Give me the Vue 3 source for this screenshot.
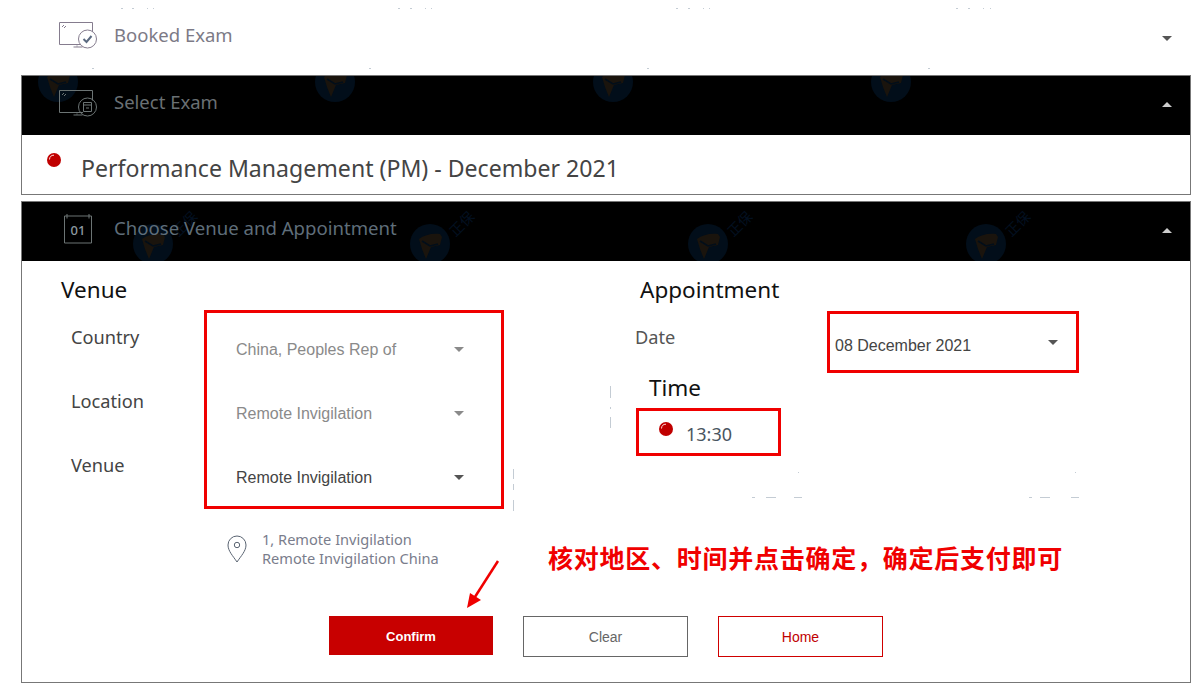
<script setup>
const selectMarks = [58, 335, 613, 891]
const venueMarks = [153, 430, 708, 986]
const venueRows = [
  { text: 'China, Peoples Rep of', off: true },
  { text: 'Remote Invigilation', off: true },
  { text: 'Remote Invigilation', off: false }
]
// leftovers of the watermark on the white areas
const specks = [
  [121, 8, 2, 1], [132, 8, 2, 1], [147, 8, 1, 1], [153, 8, 1, 1],
  [398, 8, 2, 1], [410, 8, 2, 1], [425, 8, 1, 1], [431, 8, 1, 1],
  [676, 8, 2, 1], [688, 8, 2, 1], [703, 8, 1, 1], [709, 8, 1, 1],
  [956, 8, 2, 1], [968, 8, 2, 1], [983, 8, 1, 1], [990, 8, 1, 1],
  [92, 68, 2, 1], [369, 68, 2, 1], [647, 68, 2, 1], [928, 68, 2, 1],
  [610, 386, 1, 12], [610, 407, 1, 2], [610, 417, 1, 11],
  [513, 469, 1, 10], [513, 484, 1, 6], [513, 500, 1, 11],
  [798, 472, 1, 1], [1075, 472, 1, 1],
  [752, 497, 3, 1], [766, 497, 10, 1], [794, 497, 8, 1],
  [1029, 497, 3, 1], [1040, 497, 10, 1], [1071, 497, 8, 1]
]
</script>

<template>
  <div class="page">
    <div class="booked">
      <svg class="exam-icon" width="40" height="30" viewBox="0 0 40 30" fill="none" stroke="#857c8e">
        <path d="M24 22.500H.5V.5h33v10" />
        <path d="M3 5l2-2M5 6l2-2" />
        <path d="M14.500 25h9M18 23.500v1" />
        <circle cx="28.500" cy="17" r="9" fill="#fff" />
        <path d="M24.500 17l3 3 5-6" stroke="#5b6a80" stroke-width="2" />
      </svg>
      <span class="title">Booked Exam</span>
      <span class="caret down"></span>
    </div>

    <section class="panel">
      <header class="head">
        <svg v-for="x in selectMarks" :key="x" class="mark mark-top" :style="{ left: x - 42 + 'px' }" width="40" height="40" viewBox="0 0 40 40">
          <circle cx="20" cy="20" r="20" fill="#020e1a" />
          <path d="M9 15c5-4 13-6 21-5l2 3-2 8-9 2-5 12-4-10z" fill="#1a140d" />
          <path d="M12 17l8 5 8-2" fill="none" stroke="#020e1a" stroke-width="1.500" />
        </svg>
        <svg class="exam-icon" width="40" height="30" viewBox="0 0 40 30" fill="none" stroke="#6c7474">
          <path d="M24 22.500H.5V.5h33v10" />
          <path d="M3 5l2-2M5 6l2-2" />
          <path d="M14.500 25h9M18 23.500v1" />
          <circle cx="28.500" cy="17" r="9" />
          <path d="M24.500 12.500h8v9h-8zM24.500 15h8M27 18h3" />
        </svg>
        <span class="title dim">Select Exam</span>
        <span class="caret up"></span>
      </header>
      <div class="exam-body">
        <svg class="radio" width="14" height="14" viewBox="0 0 14 14">
          <circle cx="7" cy="7" r="7" fill="#c00000" />
          <path d="M2.500 6.500A4.500 4.500 0 0 1 7 2.200" fill="none" stroke="#ffd9d9" />
        </svg>
        <span class="exam-name">Performance Management (PM) - December 2021</span>
      </div>
    </section>

    <section class="panel second">
      <header class="head">
        <svg v-for="x in venueMarks" :key="x" class="mark mark-low" :style="{ left: x - 42 + 'px' }" width="40" height="40" viewBox="0 0 40 40">
          <circle cx="20" cy="20" r="20" fill="#020e1a" />
          <path d="M9 15c5-4 13-6 21-5l2 3-2 8-9 2-5 12-4-10z" fill="#1a140d" />
          <path d="M12 17l8 5 8-2" fill="none" stroke="#020e1a" stroke-width="1.500" />
        </svg>
        <span v-for="x in venueMarks" :key="'t' + x" class="mark-text" :style="{ left: x - 5 + 'px' }">正保</span>
        <span class="cal">
          <svg class="cal-frame" width="30" height="32" viewBox="0 0 30 32" fill="none" stroke="#6c7474">
            <path d="M1.500 2h27v27h-27zM4 0v4.500M26 0v4.500" />
          </svg>
          <span class="cal-num">01</span>
        </span>
        <span class="title dim blue">Choose Venue and Appointment</span>
        <span class="caret up"></span>
      </header>

      <div class="venue-body">
        <div class="cols">
          <div class="col-left">
            <h3 class="sub">Venue</h3>
            <div class="form">
              <div class="labels">
                <div class="label">Country</div>
                <div class="label">Location</div>
                <div class="label">Venue</div>
              </div>
              <div class="red selects">
                <div v-for="(row, i) in venueRows" :key="i" class="select" :class="{ off: row.off }">
                  <span>{{ row.text }}</span>
                  <span class="caret down"></span>
                </div>
              </div>
            </div>
            <div class="address">
              <svg width="20" height="28" viewBox="0 0 20 28" fill="none" stroke="#5a6472">
                <path d="M10 27C6 21 1 16 1 10a9 9 0 0 1 18 0c0 6-5 11-9 17z" />
                <circle cx="10" cy="10" r="2.700" />
              </svg>
              <div class="address-text">
                <div>1, Remote Invigilation</div>
                <div>Remote Invigilation China</div>
              </div>
            </div>
          </div>

          <div class="col-right">
            <h3 class="sub sub-appt">Appointment</h3>
            <div class="date-row">
              <div class="label date-label">Date</div>
              <div class="red date-box">
                <span>08 December 2021</span>
                <span class="caret down"></span>
              </div>
            </div>
            <h3 class="sub sub-time">Time</h3>
            <div class="red time-box">
              <svg class="radio" width="14" height="14" viewBox="0 0 14 14">
                <circle cx="7" cy="7" r="7" fill="#c00000" />
                <path d="M2.500 6.500A4.500 4.500 0 0 1 7 2.200" fill="none" stroke="#ffd9d9" />
              </svg>
              <span class="time-text">13:30</span>
            </div>
          </div>
        </div>

        <div class="actions">
          <button class="btn confirm">Confirm</button>
          <button class="btn clear">Clear</button>
          <button class="btn home">Home</button>
        </div>

        <div class="note">核对地区、时间并点击确定，确定后支付即可</div>
        <svg class="arrow" width="36" height="52" viewBox="0 0 36 52">
          <path d="M33 2L8 41" stroke="#f00000" stroke-width="2.500" fill="none" />
          <path d="M2 49l3-15 11 7z" fill="#f00000" />
        </svg>
      </div>
    </section>

    <i v-for="(s, i) in specks" :key="i" class="speck" :style="{ left: s[0] + 'px', top: s[1] + 'px', width: s[2] + 'px', height: s[3] + 'px' }"></i>
  </div>
</template>

<style>
body {
  background: #fff;
}
</style>

<style scoped>
.page {
  position: relative;
  width: 1199px;
  height: 699px;
  overflow: hidden;
  padding-left: 21px;
  box-sizing: border-box;
  background: #fff;
  font-family: "Noto Sans", "Noto Sans CJK SC", sans-serif;
}
.booked,
.head {
  position: relative;
  display: flex;
  align-items: center;
}
.booked {
  width: 1170px;
  box-sizing: border-box;
  height: 75px;
  padding: 0 19px 0 38px;
}
.panel {
  width: 1170px;
  box-sizing: border-box;
  border: 1px solid #777;
}
.second {
  margin-top: 6px;
}
.head {
  height: 59px;
  background: #000;
  overflow: hidden;
  padding: 0 18px 0 37px;
}
.exam-icon {
  position: relative;
  flex: none;
  margin-top: -1px;
}
.title {
  position: relative;
  margin-left: 15px;
  margin-bottom: 7px;
  font-size: 18.500px;
  color: #7c7a86;
}
.head .title {
  margin-bottom: 9px;
}
.dim {
  color: #6a7074;
}
.blue {
  font-size: 18.600px;
  color: #5f6e7a;
}
.caret {
  flex: none;
  width: 0;
  height: 0;
  margin-left: auto;
  border-left: 5px solid transparent;
  border-right: 5px solid transparent;
}
.caret.down {
  border-top: 5px solid #555;
}
.caret.up {
  position: relative;
  margin-top: -2px;
  border-bottom: 5px solid #ccc;
}
.booked .caret {
  margin-top: 1px;
}
.mark {
  position: absolute;
}
.mark-top {
  top: -14px;
}
.mark-low {
  top: 22px;
}
.mark-text {
  position: absolute;
  top: 27px;
  font-size: 14px;
  line-height: 14px;
  color: #031020;
  transform: rotate(-45deg);
  transform-origin: left top;
  white-space: nowrap;
}
.exam-body {
  display: flex;
  height: 59px;
  padding-left: 25px;
  box-sizing: border-box;
}
.exam-body .radio {
  margin-top: 18px;
}
.exam-name {
  margin-left: 20px;
  font-size: 23.100px;
  line-height: 66px;
  color: #444;
}
.cal {
  position: relative;
  flex: none;
  width: 30px;
  height: 32px;
  margin-left: 4px;
  margin-top: -4px;
}
.cal-frame {
  display: block;
}
.cal-num {
  position: absolute;
  left: 0;
  right: 0;
  top: 7px;
  text-align: center;
  font-size: 13px;
  line-height: 18px;
  font-weight: 500;
  color: #8d9aa0;
}
.cal + .title {
  margin-left: 21px;
}
.venue-body {
  position: relative;
  height: 421px;
  box-sizing: border-box;
  padding-top: 14px;
}
.cols {
  display: grid;
  grid-template-columns: 613px 1fr;
}
.col-left {
  padding-left: 39px;
}
.sub {
  margin: 0 0 1px;
  font-size: 22.500px;
  font-weight: 400;
  line-height: 29px;
  color: #111;
}
.form {
  display: flex;
  padding-left: 10px;
}
.labels {
  width: 133px;
}
.label {
  height: 64px;
  line-height: 64px;
  font-size: 18.200px;
  color: #444;
}
.red {
  box-sizing: border-box;
  border: 3px solid #f00000;
}
.selects {
  width: 300px;
  height: 199px;
  margin-top: 5px;
  padding-top: 8px;
  display: flex;
  flex-direction: column;
  gap: 8px;
}
.select {
  display: flex;
  align-items: center;
  height: 56px;
  padding: 1px 37px 0 29px;
  box-sizing: border-box;
  font-family: "Liberation Sans", sans-serif;
  font-size: 16px;
  color: #444;
}
.select .caret {
  margin-top: -1px;
  border-top-color: #555;
}
.select.off {
  color: #8a8a8a;
}
.select.off .caret {
  border-top-color: #8a8a8a;
}
.address {
  display: flex;
  gap: 15px;
  align-items: center;
  margin: 21px 0 0 166px;
}
.address-text {
  font-size: 14.600px;
  line-height: 19px;
  color: #7a7d8c;
}
.sub-appt {
  margin-left: 5px;
}
.date-row {
  display: flex;
}
.date-label {
  width: 192px;
  color: #555;
}
.date-box {
  display: flex;
  align-items: center;
  width: 252px;
  height: 62px;
  margin-top: 6px;
  padding: 8px 18px 0 5px;
  font-family: "Liberation Sans", sans-serif;
  font-size: 16px;
  color: #444;
}
.date-box .caret {
  margin-top: -8px;
}
.sub-time {
  margin-left: 14px;
}
.time-box {
  display: flex;
  align-items: center;
  width: 145px;
  height: 48px;
  margin: 6px 0 0 1px;
  padding-left: 20px;
}
.time-box .radio {
  margin-bottom: 6px;
}
.time-text {
  margin-left: 13px;
  padding-top: 3px;
  font-size: 18px;
  color: #4a5560;
}
.actions {
  display: flex;
  align-items: flex-start;
  gap: 30px;
  margin-top: 48px;
  padding-left: 307px;
}
.btn {
  width: 165px;
  height: 41px;
  padding: 0;
  background: #fff;
  font-family: "Liberation Sans", sans-serif;
  font-size: 14px;
}
.confirm {
  width: 164px;
  height: 39px;
  padding-top: 1px;
  border: 0;
  background: #c80000;
  color: #fff;
  font-size: 13px;
  font-weight: 700;
}
.clear {
  border: 1px solid #666;
  color: #666;
}
.home {
  border: 1px solid #d00000;
  color: #c00000;
}
.note {
  position: absolute;
  left: 526px;
  top: 281px;
  font-size: 25px;
  line-height: 32px;
  letter-spacing: 0.75px;
  font-weight: 700;
  color: #f00000;
  white-space: nowrap;
}
.arrow {
  position: absolute;
  left: 443px;
  top: 298px;
}
.speck {
  position: absolute;
  background: #c4ccd4;
}
</style>
